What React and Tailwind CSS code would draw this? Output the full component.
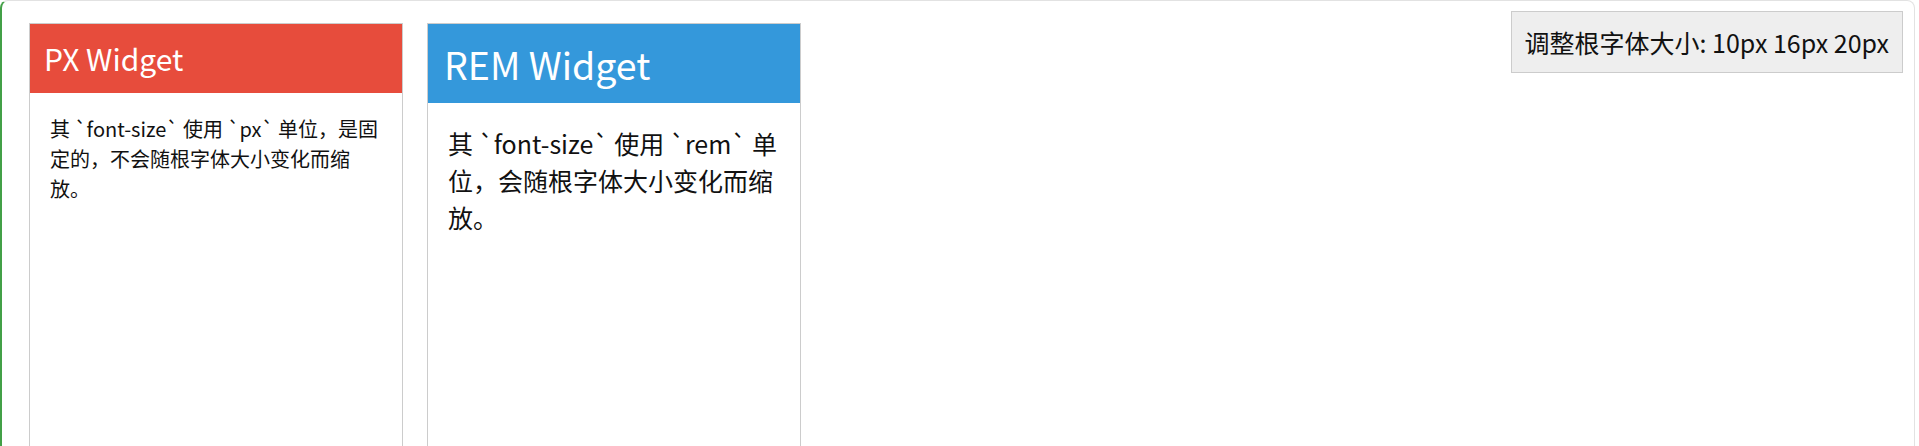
const font = { fontFamily: '"Noto Sans CJK SC", "Noto Sans", sans-serif' }

const widgets = [
  {
    key: 'px',
    title: 'PX Widget',
    text: '其 `font-size` 使用 `px` 单位，是固定的，不会随根字体大小变化而缩放。',
    header: 'bg-[#e74c3c] px-[14px] pt-[10px] pb-[11px] text-[30px] leading-[48px]',
    body: 'p-[20px] pt-[21px] text-[20px] leading-[30px]',
  },
  {
    key: 'rem',
    title: 'REM Widget',
    text: '其 `font-size` 使用 `rem` 单位，会随根字体大小变化而缩放。',
    header: 'bg-[#3498db] px-[16px] py-[10px] text-[37.5px] leading-[59px]',
    body: 'p-[20px] pt-[22px] text-[25px] leading-[37px]',
  },
]

const Widget = ({ w }) => (
  <div className="w-[374px] h-[600px] shrink-0 border border-[#cccccc] bg-white">
    <h2 className={`text-white font-normal ${w.header}`}>{w.title}</h2>
    <p className={`text-[#111111] ${w.body}`}>{w.text}</p>
  </div>
)

export default function App() {
  return (
    <div className="h-[446px] w-[1919px] overflow-hidden bg-white" style={font}>
      <div className="flex h-[600px] w-[1915px] rounded-[8px] border border-[#e2e2e2] border-l-2 border-l-[#43a047]">
        <div className="flex items-start gap-[24px] pl-[27px] pt-[22px]">
          {widgets.map((w) => (
            <Widget key={w.key} w={w} />
          ))}
        </div>
        <div className="ml-auto pt-[10px] pr-[11px]">
          <div className="border border-[#cccccc] bg-[#eeeeee] px-[13px] py-[12px] text-[25px] leading-[36px] text-[#111111] whitespace-nowrap">
            调整根字体大小: 10px 16px 20px
          </div>
        </div>
      </div>
    </div>
  )
}
